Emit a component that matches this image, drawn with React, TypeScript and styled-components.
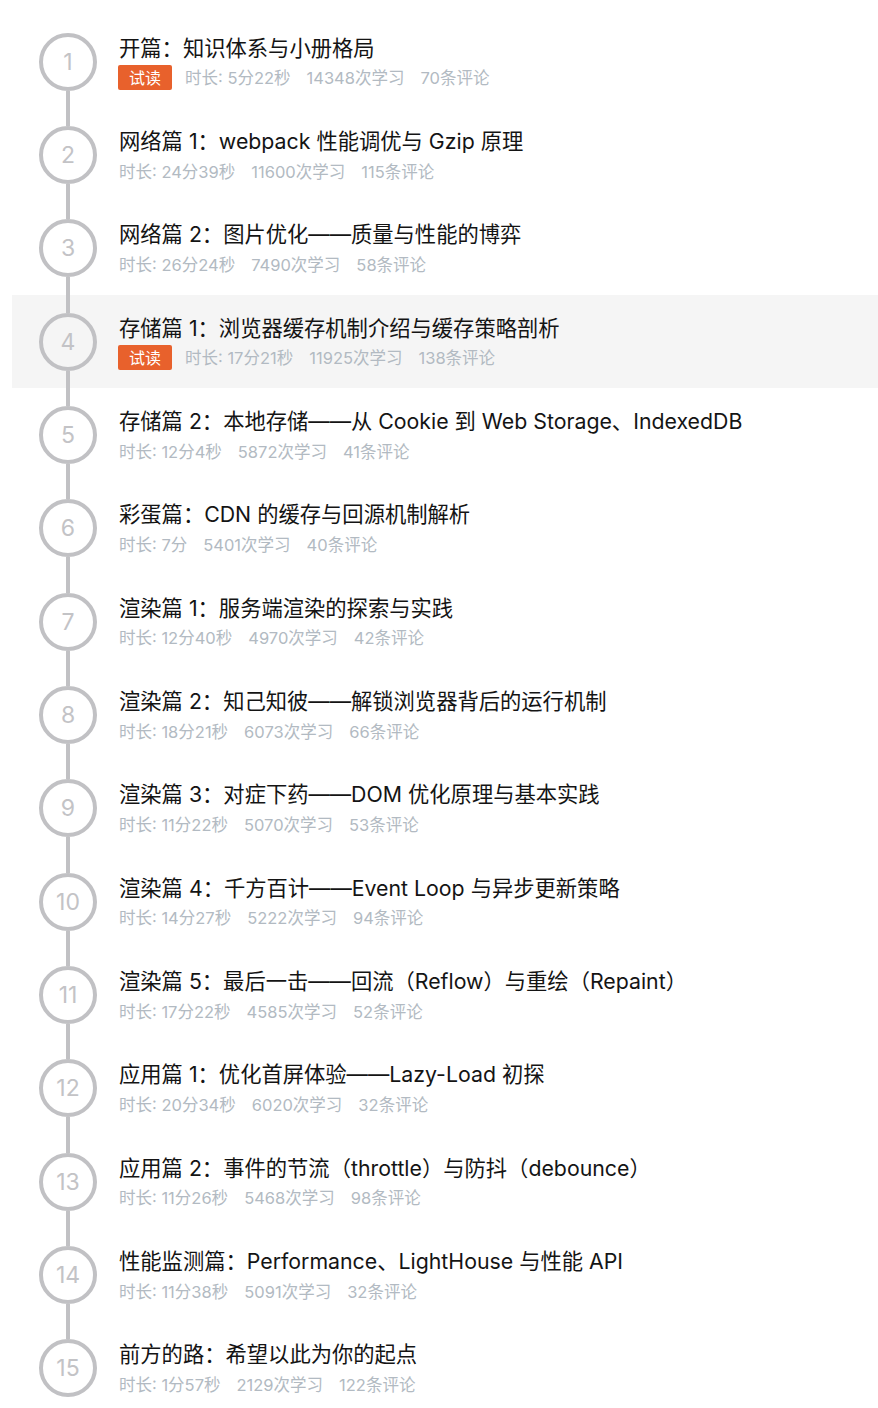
import React from "react";
import styled, { createGlobalStyle } from "styled-components";

const GlobalStyle = createGlobalStyle`
  html, body {
    margin: 0;
    padding: 0;
    background: #ffffff;
  }
  body {
    font-family: "Inter", "Noto Sans CJK SC", sans-serif;
    -webkit-font-smoothing: antialiased;
  }
`;

type Section = {
  title: string;
  duration: string;
  learners: string;
  comments: string;
  trial?: boolean;
};

const sections: Section[] = [
  { title: "开篇：知识体系与小册格局", duration: "5分22秒", learners: "14348", comments: "70", trial: true },
  { title: "网络篇 1：webpack 性能调优与 Gzip 原理", duration: "24分39秒", learners: "11600", comments: "115" },
  { title: "网络篇 2：图片优化——质量与性能的博弈", duration: "26分24秒", learners: "7490", comments: "58" },
  { title: "存储篇 1：浏览器缓存机制介绍与缓存策略剖析", duration: "17分21秒", learners: "11925", comments: "138", trial: true },
  { title: "存储篇 2：本地存储——从 Cookie 到 Web Storage、IndexedDB", duration: "12分4秒", learners: "5872", comments: "41" },
  { title: "彩蛋篇：CDN 的缓存与回源机制解析", duration: "7分", learners: "5401", comments: "40" },
  { title: "渲染篇 1：服务端渲染的探索与实践", duration: "12分40秒", learners: "4970", comments: "42" },
  { title: "渲染篇 2：知己知彼——解锁浏览器背后的运行机制", duration: "18分21秒", learners: "6073", comments: "66" },
  { title: "渲染篇 3：对症下药——DOM 优化原理与基本实践", duration: "11分22秒", learners: "5070", comments: "53" },
  { title: "渲染篇 4：千方百计——Event Loop 与异步更新策略", duration: "14分27秒", learners: "5222", comments: "94" },
  { title: "渲染篇 5：最后一击——回流（Reflow）与重绘（Repaint）", duration: "17分22秒", learners: "4585", comments: "52" },
  { title: "应用篇 1：优化首屏体验——Lazy-Load 初探", duration: "20分34秒", learners: "6020", comments: "32" },
  { title: "应用篇 2：事件的节流（throttle）与防抖（debounce）", duration: "11分26秒", learners: "5468", comments: "98" },
  { title: "性能监测篇：Performance、LightHouse 与性能 API", duration: "11分38秒", learners: "5091", comments: "32" },
  { title: "前方的路：希望以此为你的起点", duration: "1分57秒", learners: "2129", comments: "122" },
];

const ACTIVE_INDEX = 3;
const LINE_COLOR = "#c1c1c4";

const List = styled.ul`
  list-style: none;
  margin: 0;
  padding: 15px 0 0 12px;
`;

const Row = styled.li<{ $active?: boolean }>`
  display: flex;
  align-items: stretch;
  height: 93.35px;
  padding-left: 27px;
  background: ${(p) => (p.$active ? "#f5f5f5" : "transparent")};
  cursor: pointer;
`;

const Rail = styled.div`
  display: flex;
  flex-direction: column;
  align-items: center;
  width: 58px;
  flex-shrink: 0;
`;

const Segment = styled.div<{ $hidden?: boolean }>`
  flex: 1;
  width: 4px;
  background: ${(p) => (p.$hidden ? "transparent" : LINE_COLOR)};
`;

const Circle = styled.div`
  box-sizing: border-box;
  width: 58px;
  height: 58px;
  border: 4px solid ${LINE_COLOR};
  border-radius: 50%;
  display: flex;
  align-items: center;
  justify-content: center;
  font-family: "Inter", "Liberation Sans", sans-serif;
  font-size: 23px;
  font-weight: 400;
  color: #c3c3c6;
  flex-shrink: 0;
`;

const Content = styled.div`
  display: flex;
  flex-direction: column;
  justify-content: center;
  margin-left: 22px;
  min-width: 0;
`;

const Title = styled.div`
  font-size: 21.3px;
  line-height: 28px;
  color: #141414;
  white-space: nowrap;
`;

const Meta = styled.div`
  display: flex;
  align-items: center;
  height: 25px;
  margin-top: 3px;
  font-size: 16.5px;
  color: #b2bac2;
  white-space: nowrap;
`;

const Badge = styled.span`
  display: inline-flex;
  align-items: center;
  justify-content: center;
  box-sizing: border-box;
  width: 54px;
  height: 25px;
  margin-left: -1px;
  margin-right: 13px;
  border-radius: 2px;
  background: #e8612c;
  color: #ffffff;
  font-size: 16px;
`;

const MetaItem = styled.span`
  & + & {
    margin-left: 16px;
  }
`;

export default function App() {
  return (
    <>
      <GlobalStyle />
      <List>
        {sections.map((s, i) => (
          <Row key={i} $active={i === ACTIVE_INDEX}>
            <Rail>
              <Segment $hidden={i === 0} />
              <Circle>{i + 1}</Circle>
              <Segment $hidden={i === sections.length - 1} />
            </Rail>
            <Content>
              <Title>{s.title}</Title>
              <Meta>
                {s.trial && <Badge>试读</Badge>}
                <MetaItem>时长: {s.duration}</MetaItem>
                <MetaItem>{s.learners}次学习</MetaItem>
                <MetaItem>{s.comments}条评论</MetaItem>
              </Meta>
            </Content>
          </Row>
        ))}
      </List>
    </>
  );
}
